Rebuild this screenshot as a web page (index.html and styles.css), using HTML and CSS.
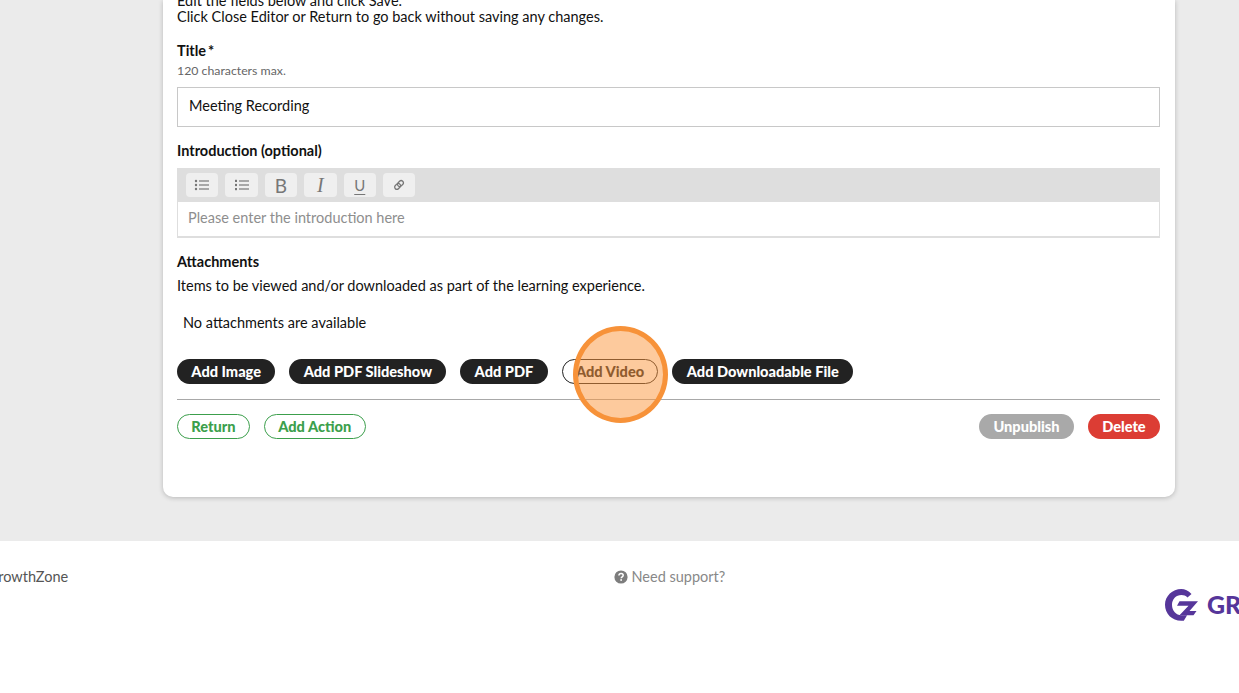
FILE: index.html
```html
<!DOCTYPE html>
<html lang="en">
<head>
  <meta charset="UTF-8">
  <title>Edit Resource</title>
  <link rel="stylesheet" href="styles.css">
</head>
<body>

  <main class="page">
    <section class="card">
      <p class="help">Edit the fields below and click Save.<br>Click Close Editor or Return to go back without saving any changes.</p>

      <label class="field-label title-label">Title<span class="req">*</span></label>
      <div class="hint">120 characters max.</div>
      <div class="text-input">Meeting Recording</div>

      <label class="field-label intro-label">Introduction (optional)</label>
      <div class="editor">
        <div class="toolbar">
          <span class="tool">
            <svg width="16" height="12" viewBox="0 0 16 12"><g fill="#777"><circle cx="2" cy="2" r="1.2"/><circle cx="2" cy="6" r="1.2"/><circle cx="2" cy="10" r="1.2"/><rect x="5" y="1.4" width="10" height="1.2"/><rect x="5" y="5.4" width="10" height="1.2"/><rect x="5" y="9.4" width="10" height="1.2"/></g></svg>
          </span>
          <span class="tool">
            <svg width="16" height="12" viewBox="0 0 16 12"><g fill="#777"><rect x="1" y="0.8" width="2" height="2.2"/><rect x="1" y="4.9" width="2" height="2.2"/><rect x="1" y="9" width="2" height="2.2"/><rect x="5" y="1.4" width="10" height="1.2"/><rect x="5" y="5.4" width="10" height="1.2"/><rect x="5" y="9.4" width="10" height="1.2"/></g></svg>
          </span>
          <span class="tool tool-b">B</span>
          <span class="tool tool-i">I</span>
          <span class="tool tool-u">U</span>
          <span class="tool">
            <svg width="12" height="12" viewBox="0 0 12 12"><g fill="none" stroke="#777" stroke-width="1.3" transform="rotate(-45 6 6)"><rect x="0.8" y="3.8" width="6.4" height="4.4" rx="2.2"/><rect x="4.8" y="3.8" width="6.4" height="4.4" rx="2.2"/></g></svg>
          </span>
        </div>
        <div class="editor-body">Please enter the introduction here</div>
      </div>

      <label class="field-label attach-label">Attachments</label>
      <p class="attach-help">Items to be viewed and/or downloaded as part of the learning experience.</p>
      <p class="no-attach">No attachments are available</p>

      <div class="btn-row add-row">
        <button class="btn btn-dark">Add Image</button>
        <button class="btn btn-dark">Add PDF Slideshow</button>
        <button class="btn btn-dark">Add PDF</button>
        <button class="btn btn-outline-dark video-btn">Add Video<span class="click-mark"></span></button>
        <button class="btn btn-dark">Add Downloadable File</button>
      </div>

      <div class="actions">
        <div class="btn-row">
          <button class="btn btn-green">Return</button>
          <button class="btn btn-green">Add Action</button>
        </div>
        <div class="btn-row">
          <button class="btn btn-grey">Unpublish</button>
          <button class="btn btn-red">Delete</button>
        </div>
      </div>
    </section>
  </main>

  <footer class="footer">
    <div class="copy">© GrowthZone</div>
    <div class="support">
      <svg width="14" height="14" viewBox="0 0 14 14"><circle cx="7" cy="7" r="6.6" fill="#7d7d7d"/><path d="M4.900 5.500C5 4.200 5.900 3.500 7.100 3.500c1.200 0 2.100.8 2.100 1.800 0 1.600-2 1.500-2 3" fill="none" stroke="#fff" stroke-width="1.500"/><rect x="6.300" y="9.200" width="1.700" height="1.600" fill="#fff"/></svg>
      <span>Need support?</span>
    </div>
    <div class="logo">
      <svg class="logo-mark" width="35" height="34" viewBox="0 0 35 34"><path d="M27.500 6C24.500 2.800 20.800 1 17.300 1 8.500 1 1 8 1 16.800c0 9 7 16 16.300 16h2.500l3.300-5.500h-5.800c-5 0-9.300-4.600-9.300-10.500 0-5.600 4-9.800 9.500-9.800 2.200 0 4.200.7 6 2.500z" fill="#56369a"/><path d="M15.500 13.300h18.500l-8.500 9.700h7l-3 4.300H15.500l9-9.500h-11.500z" fill="#56369a"/></svg>
      <span class="logo-text">GROWTHZONE</span>
    </div>
  </footer>

</body>
</html>
```

FILE: styles.css
```css
* {
  box-sizing: border-box;
}

html, body {
  height: 693px;
  overflow: hidden;
}

body {
  margin: 0;
  background-color: #fff;
  color: #111;
  font-family: 'Lato', sans-serif;
  font-size: 14.5px;
}

.page {
  display: flow-root;
  background-color: #ebebeb;
  height: 541px;
  padding-left: 163px;
}

.card {
  display: flow-root;
  width: 1012px;
  height: 497px;
  padding: 0 15px 0 14px;
  background-color: #fff;
  border-radius: 0 0 10px 10px;
  box-shadow: 0 1px 5px rgba(0, 0, 0, 0.22);
}

.help {
  margin: -7px 0 0;
  line-height: 16px;
}

.field-label {
  display: block;
  font-weight: 700;
  line-height: 18px;
}

.title-label {
  margin-top: 17px;
}

.req {
  margin-left: 2px;
}

.hint {
  margin-top: 3px;
  font-size: 12.300px;
  line-height: 16px;
  color: #666;
}

.text-input {
  height: 40px;
  margin-top: 8px;
  padding: 0 11px;
  border: 1px solid #c8c8c8;
  line-height: 35px;
}

.intro-label {
  margin-top: 15px;
}

.editor {
  margin-top: 8px;
  border: 1px solid #dedede;
  border-top: none;
  border-bottom-width: 2px;
}

.toolbar {
  display: flex;
  gap: 7px;
  height: 34px;
  padding: 5px 8px;
  background-color: #dedede;
}

.tool {
  display: flex;
  align-items: center;
  justify-content: center;
  width: 32.400px;
  height: 24px;
  background-color: #efefef;
  border-radius: 4px;
  color: #777;
}

.tool-b {
  font-size: 19px;
}

.tool-i {
  font-family: 'Liberation Serif', serif;
  font-style: italic;
  font-size: 20px;
}

.tool-u {
  font-size: 15px;
  text-decoration: underline;
  text-underline-offset: 3px;
}

.editor-body {
  height: 34px;
  padding: 0 10px;
  line-height: 32px;
  color: #8e8e8e;
}

.attach-label {
  margin-top: 15px;
}

.attach-help {
  margin: 6px 0 0;
  line-height: 18px;
}

.no-attach {
  margin: 19px 0 0 6px;
  line-height: 18px;
}

.btn-row {
  display: flex;
  gap: 14px;
}

.add-row {
  margin-top: 27px;
}

.btn {
  height: 25px;
  padding: 0 13.300px;
  border-radius: 13px;
  border: 1px solid transparent;
  font-family: inherit;
  font-size: 14.600px;
  font-weight: 900;
  line-height: 20px;
  white-space: nowrap;
}

.btn-dark {
  background-color: #222;
  color: #fff;
}

.btn-outline-dark {
  background-color: #fff;
  border-color: #222;
  color: #222;
}

.video-btn {
  position: relative;
}

.click-mark {
  position: absolute;
  left: 10px;
  top: -34px;
  width: 95px;
  height: 97px;
  border: 5px solid #f79239;
  border-radius: 50%;
  background-color: rgba(252, 150, 60, 0.5);
}

.actions {
  display: flex;
  justify-content: space-between;
  margin-top: 15px;
  padding-top: 14px;
  border-top: 1px solid #a8a8a8;
}

.btn-green {
  background-color: #fff;
  border-color: #3c9f4c;
  color: #3c9f4c;
}

.btn-grey {
  background-color: #a9a9a9;
  color: #fff;
}

.btn-red {
  background-color: #dc3d34;
  color: #fff;
}

.footer {
  display: grid;
  grid-template-columns: 613.500px auto 1fr;
  height: 152px;
  overflow: hidden;
  color: #555;
}

.copy {
  margin: 27px 0 0 -28px;
  line-height: 18px;
  white-space: nowrap;
}

.support {
  display: flex;
  align-items: flex-start;
  gap: 4px;
  margin-top: 27px;
  line-height: 18px;
  color: #888;
}

.support svg {
  margin-top: 2px;
}

.logo {
  display: flex;
  align-items: flex-start;
  gap: 8px;
  justify-self: end;
  width: 75px;
  margin-top: 47px;
  white-space: nowrap;
}

.logo-mark {
  flex: none;
}

.logo-text {
  margin-top: 4px;
  font-size: 25px;
  font-weight: 900;
  line-height: 24px;
  color: #56369a;
}
```
